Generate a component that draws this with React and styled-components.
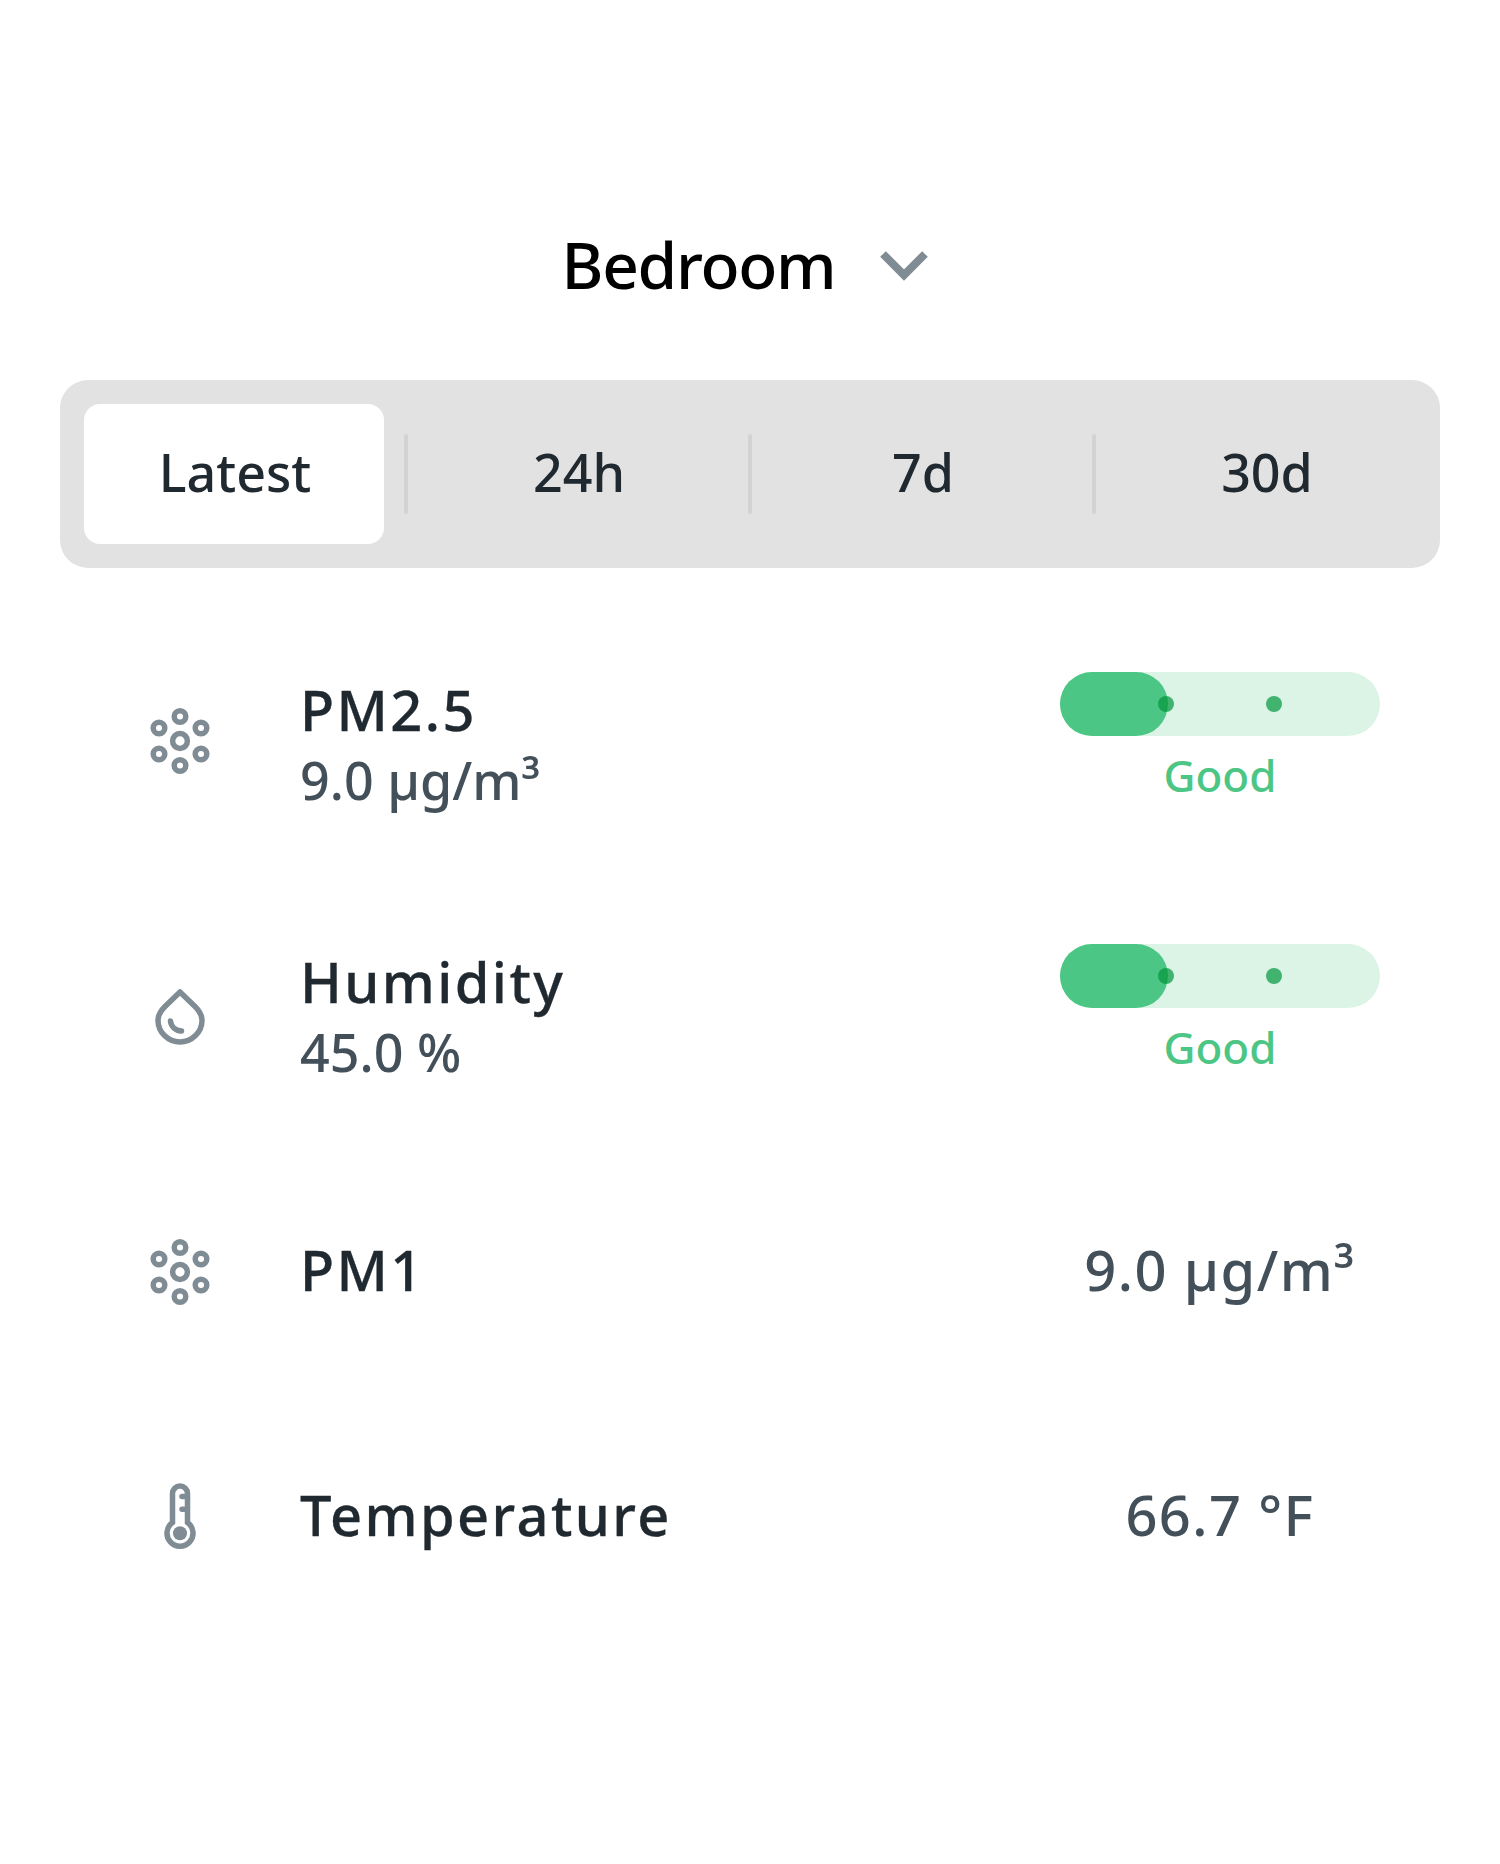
import React from "react";
import styled, { createGlobalStyle } from "styled-components";

const GlobalStyle = createGlobalStyle`
  body {
    margin: 0;
    background: #fff;
    font-family: "Noto Sans", "Open Sans", sans-serif;
  }
`;

const Page = styled.div`
  width: 1500px;
  height: 1864px;
  padding: 220px 60px 0;
  box-sizing: border-box;
`;

const Header = styled.div`
  display: flex;
  align-items: center;
  justify-content: center;
  gap: 45px;
  height: 88px;
  margin: 0 10px 72px 0;
  color: #000;
  font-size: 64px;
  font-weight: 500;
  letter-spacing: -1.3px;
`;

const ChevronIcon = styled.svg`
  margin-top: 4px;
`;

const Tabs = styled.div`
  display: flex;
  align-items: center;
  height: 188px;
  padding: 24px;
  box-sizing: border-box;
  background: #e2e2e2;
  border-radius: 28px;
  margin-bottom: 34px;
`;

const Tab = styled.div`
  flex: 0 0 300px;
  height: 140px;
  padding: 0 0 6px 2px;
  box-sizing: border-box;
  display: flex;
  align-items: center;
  justify-content: center;
  border-radius: 16px;
  background: ${(props) => (props.$active ? "#fff" : "transparent")};
  color: #20292f;
  font-size: 52px;
  font-weight: 500;
`;

const Divider = styled.div`
  flex: 0 0 4px;
  height: 80px;
  margin: 0 20px;
  border-radius: 2px;
  background: #d2d3d5;
`;

const Row = styled.div`
  display: flex;
  align-items: center;
  height: ${(props) => (props.$tall ? "272px" : "245px")};
  padding: 0 60px 0 90px;
`;

const IconBox = styled.div`
  flex: 0 0 60px;
  height: 60px;
  margin-right: 90px;
  color: #808c94;
  svg {
    display: block;
    overflow: visible;
  }
`;

const Info = styled.div`
  flex: 1;
  padding-top: ${(props) => (props.$stacked ? "12px" : "0")};
`;

const Title = styled.div`
  color: #20292f;
  font-size: 56px;
  line-height: 70px;
  font-weight: 500;
  letter-spacing: 2.4px;
  -webkit-text-stroke: 0.3px #20292f;
`;

const Value = styled.div`
  color: #435059;
  font-size: 52px;
  line-height: 70px;
  font-weight: 500;
  margin-top: 1px;
`;

const Side = styled.div`
  flex: 0 0 320px;
  text-align: center;
  color: #435059;
  font-size: 56px;
  font-weight: 500;
  letter-spacing: 1.4px;
`;

const Track = styled.div`
  position: relative;
  height: 64px;
  border-radius: 32px;
  background: #dcf4e6;
`;

const Fill = styled.div`
  position: absolute;
  left: 0;
  top: 0;
  width: 108px;
  height: 64px;
  border-radius: 32px;
  background: #4cc684;
`;

const Dot = styled.div`
  position: absolute;
  top: 24px;
  left: ${(props) => props.$left}px;
  width: 16px;
  height: 16px;
  border-radius: 50%;
  background: rgba(0, 150, 60, 0.7);
`;

const Status = styled.div`
  margin-top: 9px;
  color: #4cc684;
  font-size: 44px;
  line-height: 60px;
  font-weight: 500;
  letter-spacing: 0;
`;

const Chevron = () => (
  <ChevronIcon width="48" height="30" viewBox="0 0 48 30">
    <path d="M3 3 L24 24 L45 3" fill="none" stroke="#808c94" strokeWidth="8" />
  </ChevronIcon>
);

const ParticleIcon = () => (
  <svg width="60" height="60" viewBox="0 0 60 60" fill="none" stroke="currentColor" strokeWidth="5.5">
    <circle cx="30" cy="33" r="7.4" />
    <circle cx="30" cy="8.5" r="5.8" />
    <circle cx="30" cy="57.5" r="5.8" />
    <circle cx="9" cy="20" r="5.8" />
    <circle cx="51" cy="20" r="5.8" />
    <circle cx="9" cy="46" r="5.8" />
    <circle cx="51" cy="46" r="5.8" />
  </svg>
);

const DropIcon = () => (
  <svg width="60" height="60" viewBox="0 0 60 60" fill="none" stroke="currentColor" strokeWidth="5.5" strokeLinecap="round" strokeLinejoin="round">
    <path d="M30 12 L45 26.5 C49 30.5 52 35 52 40.5 C52 52 42 62 30 62 C18 62 8 52 8 40.5 C8 35 11 30.5 15 26.5 Z" />
    <path d="M20.5 41 C21 46.5 25.5 50.5 31.5 51" />
  </svg>
);

const ThermometerIcon = () => (
  <svg width="60" height="60" viewBox="0 0 60 60" fill="none" stroke="currentColor" strokeWidth="5.5" strokeLinecap="round">
    <path d="M22.5 38.6 V9.5 a7.5 7.5 0 0 1 15 0 V38.6 a13 13 0 1 1 -15 0 Z" />
    <path d="M32 12.5 h5 M32 25.2 h5" />
    <circle cx="30" cy="49.2" r="7" fill="currentColor" stroke="none" />
  </svg>
);

const Meter = () => (
  <>
    <Track>
      <Fill />
      <Dot $left={98} />
      <Dot $left={206} />
    </Track>
    <Status>Good</Status>
  </>
);

const rows = [
  { icon: <ParticleIcon />, title: "PM2.5", value: "9.0 µg/m³", meter: true },
  { icon: <DropIcon />, title: "Humidity", value: "45.0 %", meter: true },
  { icon: <ParticleIcon />, title: "PM1", side: "9.0 µg/m³" },
  { icon: <ThermometerIcon />, title: "Temperature", side: "66.7 °F" },
];

export default function App() {
  return (
    <Page>
      <GlobalStyle />
      <Header>
        <span>Bedroom</span>
        <Chevron />
      </Header>
      <Tabs>
        <Tab $active>Latest</Tab>
        <Divider />
        <Tab>24h</Tab>
        <Divider />
        <Tab>7d</Tab>
        <Divider />
        <Tab>30d</Tab>
      </Tabs>
      {rows.map((row) => (
        <Row key={row.title} $tall={row.meter}>
          <IconBox>{row.icon}</IconBox>
          <Info $stacked={Boolean(row.value)}>
            <Title>{row.title}</Title>
            {row.value && <Value>{row.value}</Value>}
          </Info>
          <Side>{row.meter ? <Meter /> : row.side}</Side>
        </Row>
      ))}
    </Page>
  );
}
